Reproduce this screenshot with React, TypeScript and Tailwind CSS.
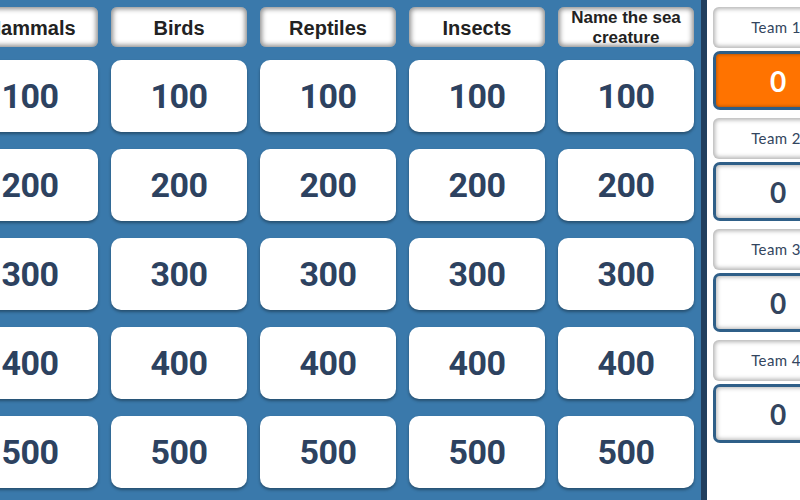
const categories = ['Mammals', 'Birds', 'Reptiles', 'Insects', 'Name the sea creature']
const values = [100, 200, 300, 400, 500]
const teams = [
  { name: 'Team 1', score: 0, active: true },
  { name: 'Team 2', score: 0, active: false },
  { name: 'Team 3', score: 0, active: false },
  { name: 'Team 4', score: 0, active: false },
]

function Board() {
  return (
    <div className="w-[701px] shrink-0 h-full bg-[#3a79ab] overflow-hidden">
      <div className="ml-[-38px] pt-[7px] grid grid-cols-[repeat(5,136px)] gap-x-[13px]">
        {categories.map((c) => (
          <div
            key={c}
            className="h-[40px] rounded-[6px] bg-white flex items-center justify-center text-center px-1 pt-[1px] shadow-[inset_0_0_5px_2px_rgba(0,0,0,0.45)] font-['Liberation_Sans',Arial,sans-serif] font-bold text-[#222]"
          >
            {c.length > 12 ? (
              <span className="text-[17px] leading-[20px]">{c}</span>
            ) : (
              <span className="text-[20px] leading-[22px] whitespace-nowrap">{c}</span>
            )}
          </div>
        ))}
      </div>
      <div className="ml-[-38px] mt-[13px] grid grid-cols-[repeat(5,136px)] gap-x-[13px] gap-y-[17px]">
        {values.map((v) =>
          categories.map((c) => (
            <div
              key={c + v}
              className="h-[72px] rounded-[10px] bg-white flex items-center justify-center shadow-[0_2px_3px_rgba(0,0,0,0.35)] font-['Roboto',sans-serif] font-bold text-[34px] tracking-[-0.5px] text-[#2d4260]"
            >
              {v}
            </div>
          ))
        )}
      </div>
    </div>
  )
}

function Sidebar() {
  return (
    <div className="flex shrink-0 h-full">
      <div className="w-[6px] h-full bg-[#213f5e]" />
      <div className="w-[140px] h-full bg-white pl-[6px] pt-[7px] flex flex-col">
        {teams.map((t) => (
          <div key={t.name} className="flex flex-col mb-[8px]">
            <div className="h-[41px] w-[130px] rounded-[6px] bg-white flex items-center justify-center pr-[4px] shadow-[inset_0_0_4px_2px_rgba(0,0,0,0.3)] font-['Lato',sans-serif] text-[15px] text-[#33455e] tracking-[0.4px]">
              {t.name}
            </div>
            <div
              className={
                'mt-[3px] h-[59px] w-[130px] rounded-[7px] border-[3px] border-[#2f5f88] flex items-center justify-center font-["Lato",sans-serif] font-bold text-[28px] ' +
                (t.active
                  ? 'bg-[#ff7300] text-white shadow-[inset_0_0_3px_1px_rgba(0,0,0,0.25)]'
                  : 'bg-white text-[#33455e] shadow-[inset_0_0_4px_1px_rgba(0,0,0,0.3)]')
              }
            >
              {t.score}
            </div>
          </div>
        ))}
      </div>
    </div>
  )
}

export default function App() {
  return (
    <div className="w-[800px] h-[500px] overflow-hidden flex bg-white">
      <Board />
      <Sidebar />
    </div>
  )
}
